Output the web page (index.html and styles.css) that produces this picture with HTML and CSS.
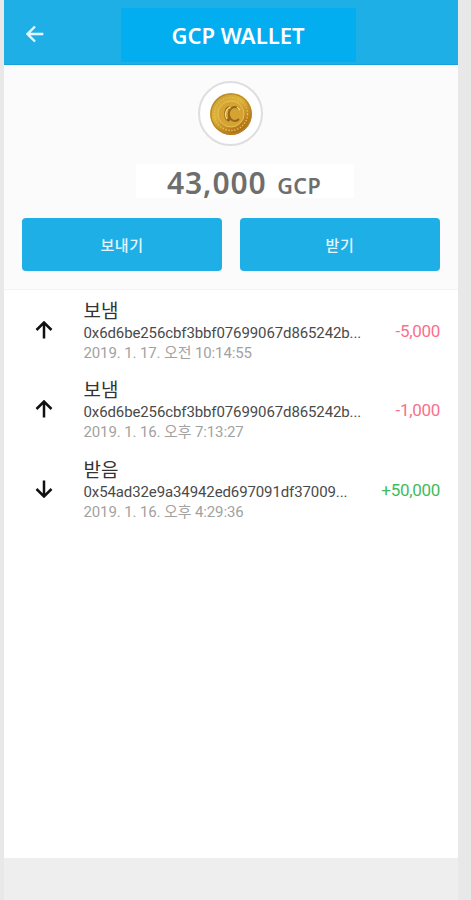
FILE: index.html
```html
<!DOCTYPE html>
<html lang="ko">
<head>
    <meta charset="UTF-8">
    <meta name="viewport" content="width=device-width, initial-scale=1.0">
    <title>GCP WALLET</title>
    <link rel="stylesheet" href="styles.css">
</head>
<body>
    <div class="app">
        <header class="header">
            <a class="back" href="#" aria-label="뒤로">
                <svg width="18" height="18" viewBox="0 0 18 18"><path d="M17.3 9H1.8M9 1.5L1.5 9L9 16.5"/></svg>
            </a>
            <h1>GCP WALLET</h1>
        </header>

        <section class="summary">
            <div class="coin">
                <svg width="44" height="44" viewBox="0 0 44 44">
                    <defs>
                        <linearGradient id="gold" x1="0" y1="0" x2="0.7" y2="1">
                            <stop offset="0" stop-color="#c69a35"/>
                            <stop offset="0.45" stop-color="#dfb337"/>
                            <stop offset="1" stop-color="#a9660f"/>
                        </linearGradient>
                    </defs>
                    <circle cx="22" cy="22" r="21" fill="url(#gold)"/>
                    <circle cx="22" cy="22" r="20" fill="none" stroke="#b98528" stroke-width="1.2"/>
                    <circle cx="22" cy="22" r="16.5" fill="none" stroke="#e0bd55" stroke-width="1.4" stroke-dasharray="1.5 1.5"/>
                    <circle cx="22" cy="22" r="13" fill="#d4a332" stroke="#e6c257" stroke-width="1"/>
                    <path d="M20 15A6 7.5 0 0 0 20 29M20 15V18M20 29V23M30 17A6 7 0 1 0 30 27" fill="none" stroke="#98651a" stroke-width="2"/>
                    <path d="M21.5 15.5A6 7 0 0 0 18 27M28 15L31 18" fill="none" stroke="#f4db79" stroke-width="1.3"/>
                </svg>
            </div>
            <p class="balance">43,000 <span>GCP</span></p>
            <div class="actions">
                <button type="button">보내기</button>
                <button type="button">받기</button>
            </div>
        </section>

        <ul class="history">
            <li>
                <svg class="arrow" width="18" height="18" viewBox="0 0 18 18"><path d="M9 17.5V2M1.5 9L9 1.5L16.5 9"/></svg>
                <div class="detail">
                    <h2>보냄</h2>
                    <p class="address">0x6d6be256cbf3bbf07699067d865242b...</p>
                    <p class="date">2019. 1. 17. 오전 10:14:55</p>
                </div>
                <span class="amount sent">-5,000</span>
            </li>
            <li>
                <svg class="arrow" width="18" height="18" viewBox="0 0 18 18"><path d="M9 17.5V2M1.5 9L9 1.5L16.5 9"/></svg>
                <div class="detail">
                    <h2>보냄</h2>
                    <p class="address">0x6d6be256cbf3bbf07699067d865242b...</p>
                    <p class="date">2019. 1. 16. 오후 7:13:27</p>
                </div>
                <span class="amount sent">-1,000</span>
            </li>
            <li>
                <svg class="arrow" width="18" height="18" viewBox="0 0 18 18"><path d="M9 0.5V16M1.5 9L9 16.5L16.5 9"/></svg>
                <div class="detail">
                    <h2>받음</h2>
                    <p class="address">0x54ad32e9a34942ed697091df37009...</p>
                    <p class="date">2019. 1. 16. 오후 4:29:36</p>
                </div>
                <span class="amount received">+50,000</span>
            </li>
        </ul>
    </div>
</body>
</html>
```
FILE: styles.css
```css
* {
    margin: 0;
    padding: 0;
    box-sizing: border-box;
}

body {
    font-family: Roboto, "Noto Sans CJK KR", sans-serif;
    background: #e8e8e8;
    height: 900px;
    padding: 0 13px 0 4px;
    overflow: hidden;
}

.app {
    height: 900px;
    background: #fff;
    border-bottom: 42px solid #eeeeee;
}

/* Header */
.header {
    height: 65px;
    display: grid;
    grid-template-columns: 117px 235px 1fr;
    background: #1fafe7;
    border-bottom: 1px solid #16a3dc;
}

.back {
    padding: 25px 0 0 22px;
}

.back svg {
    display: block;
    fill: none;
    stroke: #e6f8ff;
    stroke-width: 2.4;
}

h1 {
    margin: 8px 0 2px;
    padding-right: 1px;
    background: #02aef0;
    color: #fff;
    font: 600 22px/54px "Noto Sans", sans-serif;
    text-align: center;
}

/* Balance */
.summary {
    height: 225px;
    padding: 16px 18px 0;
    background: #fbfbfb;
    border-bottom: 1px solid #f3f3f3;
}

.coin {
    width: 65px;
    height: 65px;
    margin: 0 0 0 176px;
    display: flex;
    justify-content: center;
    align-items: center;
    background: #fff;
    border: 2px solid #dedede;
    border-radius: 50%;
}

.balance {
    width: 218px;
    height: 34px;
    margin: 18px auto 20px 114px;
    padding-left: 31px;
    background: #fff;
    color: #6e6e6e;
    font: 600 30px/38px "Noto Sans", sans-serif;
    letter-spacing: 0.9px;
    white-space: nowrap;
}

.balance span {
    margin-left: 2px;
    font-size: 21.5px;
    letter-spacing: 0.4px;
}

.actions {
    display: grid;
    grid-template-columns: 1fr 1fr;
    gap: 18px;
}

button {
    height: 53px;
    border: none;
    border-radius: 4px;
    background: #1eafe7;
    color: #e4f7ff;
    font: 500 15px "Noto Sans CJK KR", sans-serif;
    letter-spacing: 0.6px;
}

/* Transactions */
.history {
    list-style: none;
    padding: 9px 18px 0 30px;
}

.history li {
    height: 79.3px;
    display: flex;
}

.arrow {
    flex: none;
    margin: 22px 31px 0 0.5px;
    fill: none;
    stroke: #111;
    stroke-width: 2.5;
}

.detail {
    flex: 1;
    min-width: 0;
    white-space: nowrap;
}

h2 {
    color: #333;
    font: 400 19px/22px "Noto Sans CJK KR", sans-serif;
}

.address {
    color: #4a4a4a;
    font-size: 15px;
    line-height: 24px;
    letter-spacing: -0.11px;
}

.date {
    color: #a2a2a2;
    font-size: 15px;
    line-height: 17px;
    letter-spacing: -0.12px;
}

.amount {
    margin-top: 22px;
    font-size: 17px;
    line-height: 20px;
    letter-spacing: -0.3px;
}

.sent {
    color: #f9708a;
}

.received {
    color: #3fbb5c;
}
```
